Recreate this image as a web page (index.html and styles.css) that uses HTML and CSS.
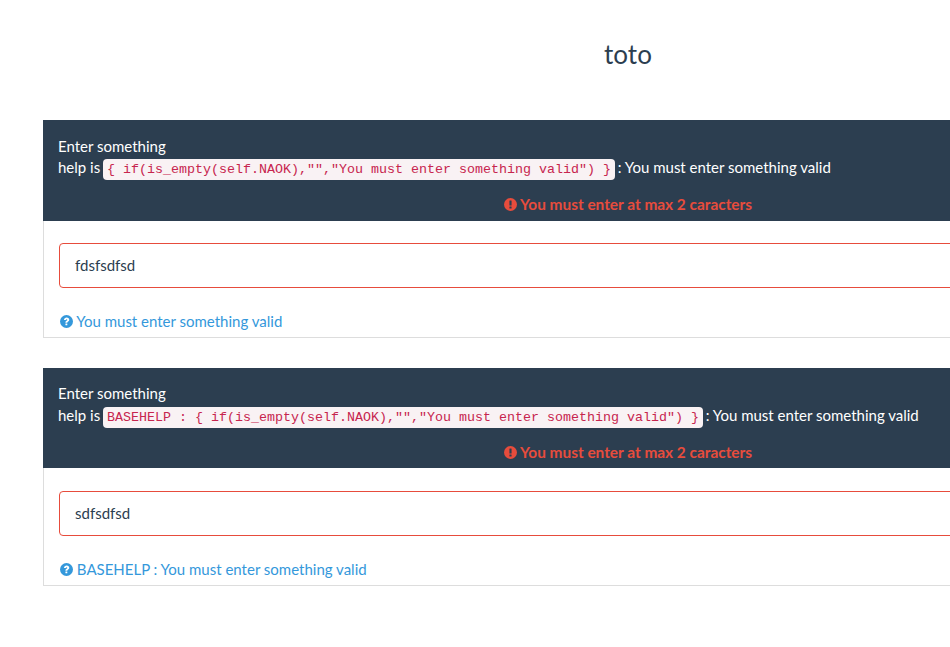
FILE: index.html
```html
<!DOCTYPE html>
<html lang="en">
<head>
<meta charset="utf-8">
<title>toto</title>
<link rel="stylesheet" href="styles.css">
</head>
<body>
<main class="page">
  <h1 class="title">toto</h1>
  <section class="question">
    <header class="question-head">
      <div>Enter something</div>
      <div>help is <code class="code">{ if(is_empty(self.NAOK),"","You must enter something valid") }</code> : You must enter something valid</div>
      <div class="error">
        <svg class="icon" viewBox="0 0 24 24" aria-hidden="true"><circle cx="12" cy="12" r="12" fill="currentColor"/><rect x="10" y="4.5" width="4" height="9.5" rx="0.8" fill="#2c3e50"/><rect x="10" y="15.5" width="4" height="4" rx="0.8" fill="#2c3e50"/></svg>
        You must enter at max 2 caracters
      </div>
    </header>
    <div class="question-body">
      <input class="field" type="text" value="fdsfsdfsd">
      <div class="help">
        <svg class="icon help-icon" viewBox="0 0 24 24" aria-hidden="true"><circle cx="12" cy="12" r="12" fill="currentColor"/><path d="M7.2 9.2C7.5 6.4 9.6 4.6 12.3 4.6c2.7 0 4.8 1.8 4.8 4.2 0 1.9-1.2 2.8-2.4 3.6-.9.6-1.2.9-1.2 1.9H10c0-2.1.8-3 2-3.8.9-.6 1.4-.9 1.4-1.5 0-.7-.5-1.1-1.2-1.1-.8 0-1.3.4-1.5 1.4z" fill="#fff"/><rect x="10" y="15.5" width="3.5" height="3.6" rx="0.5" fill="#fff"/></svg>
        You must enter something valid
      </div>
    </div>
  </section>
  <section class="question">
    <header class="question-head">
      <div>Enter something</div>
      <div>help is <code class="code">BASEHELP : { if(is_empty(self.NAOK),"","You must enter something valid") }</code> : You must enter something valid</div>
      <div class="error">
        <svg class="icon" viewBox="0 0 24 24" aria-hidden="true"><circle cx="12" cy="12" r="12" fill="currentColor"/><rect x="10" y="4.5" width="4" height="9.5" rx="0.8" fill="#2c3e50"/><rect x="10" y="15.5" width="4" height="4" rx="0.8" fill="#2c3e50"/></svg>
        You must enter at max 2 caracters
      </div>
    </header>
    <div class="question-body">
      <input class="field" type="text" value="sdfsdfsd">
      <div class="help">
        <svg class="icon help-icon" viewBox="0 0 24 24" aria-hidden="true"><circle cx="12" cy="12" r="12" fill="currentColor"/><path d="M7.2 9.2C7.5 6.4 9.6 4.6 12.3 4.6c2.7 0 4.8 1.8 4.8 4.2 0 1.9-1.2 2.8-2.4 3.6-.9.6-1.2.9-1.2 1.9H10c0-2.1.8-3 2-3.8.9-.6 1.4-.9 1.4-1.5 0-.7-.5-1.1-1.2-1.1-.8 0-1.3.4-1.5 1.4z" fill="#fff"/><rect x="10" y="15.5" width="3.5" height="3.6" rx="0.5" fill="#fff"/></svg>
        BASEHELP : You must enter something valid
      </div>
    </div>
  </section>
</main>
</body>
</html>
```
FILE: styles.css
```css
html, body {
  margin: 0;
  overflow: hidden;
  height: 100%;
  background: #fff;
}
body {
  font-family: Lato, "Liberation Sans", sans-serif;
  font-size: 15px;
  line-height: 21.43px;
  color: #2c3e50;
}
.page {
  width: 1170px;
  margin-left: 43px;
}
.title {
  margin: 0;
  padding-top: 37px;
  height: 120px;
  box-sizing: border-box;
  font-size: 26px;
  line-height: 34px;
  font-weight: 400;
  text-align: center;
}
.question {
  margin-bottom: 29.8px;
  border: 1px solid #ddd;
  border-top: 0;
}
.question-head {
  margin: 0 -1px;
  padding: 15.5px 15px 5.8px;
  background: #2c3e50;
  color: #fff;
}
.code {
  display: inline-block;
  margin: -2px -1px -2px -1px;
  padding: 2px 4px;
  font-family: "Liberation Mono", monospace;
  font-size: 13.33px;
  line-height: 17px;
  color: #c7254e;
  background: #f9f2f4;
  border-radius: 4px;
  vertical-align: baseline;
}
.error {
  margin-top: 16px;
  height: 20.43px;
  text-align: center;
  font-size: 15.4px;
  font-weight: 700;
  color: #e74c3c;
}
.icon {
  width: 13px;
  height: 13px;
  vertical-align: -1px;
}
.help-icon {
  margin-left: 1px;
}
.question-body {
  padding: 22.4px 15px 4.47px;
}
.field {
  display: block;
  box-sizing: border-box;
  width: 100%;
  height: 45px;
  padding: 10px 15px;
  border: 1px solid #e74c3c;
  border-radius: 4px;
  background: #fff;
  color: #2c3e50;
  font: 15px/1.43 Lato, "Liberation Sans", sans-serif;
  outline: 0;
}
.help {
  margin-top: 23px;
  height: 21.43px;
  color: #3498db;
}
```
